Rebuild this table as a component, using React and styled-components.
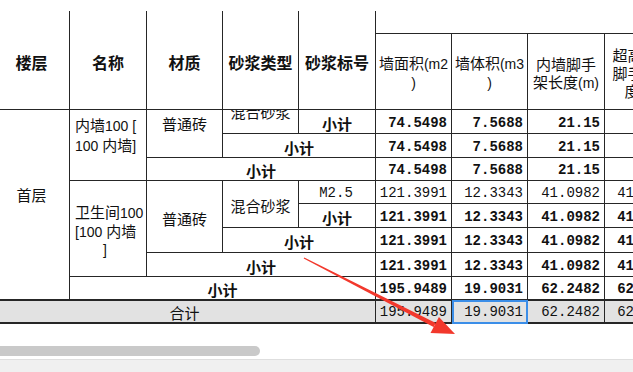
import React, { useLayoutEffect, useRef } from 'react';
import styled, { createGlobalStyle, css } from 'styled-components';

const GlobalStyle = createGlobalStyle`
  html, body { margin: 0; padding: 0; background: #fff; overflow: hidden; }
  body { font-family: "Noto Sans CJK SC", "Liberation Sans", sans-serif; color: #111; }
`;

const LINE = '#262626';
const CJK = `"Noto Sans CJK SC", "Liberation Sans", sans-serif`;
const COLS = [76, 77, 76, 76, 77, 76, 76, 77, 76];
const TABLE_W = COLS.reduce((a, b) => a + b, 0);

const Page = styled.div`
  position: relative;
  width: 633px;
  height: 372px;
  display: flex;
  flex-direction: column;
  overflow: hidden;
  background: #fff;
`;

const Viewport = styled.div`
  flex: none;
  width: 633px;
  height: ${(p) => p.$h}px;
  margin-top: ${(p) => p.$mt || 0}px;
  overflow: hidden;
`;

const Grid = styled.table`
  table-layout: fixed;
  border-collapse: separate;
  border-spacing: 0;
  width: ${TABLE_W}px;
`;

const Row = styled.tr`
  height: ${(p) => p.$h}px;
`;

const baseCell = css`
  border-right: 1px solid ${LINE};
  border-bottom: 1px solid ${LINE};
  box-sizing: border-box;
  overflow: hidden;
  white-space: nowrap;
  vertical-align: middle;
  color: #111;
`;

const HeadCell = styled.th`
  ${baseCell}
  padding: 3px 2px 0;
  font-family: ${CJK};
  font-size: ${(p) => (p.$bold ? 16 : 15)}px;
  font-weight: ${(p) => (p.$bold ? 700 : 400)};
  line-height: 18px;
  text-align: center;
`;

const Half = styled.span`
  font-family: "Liberation Sans", sans-serif;
  font-size: 14px;
`;

const TextCell = styled.td`
  ${baseCell}
  padding: ${(p) => p.$pt ?? 3}px 5px ${(p) => p.$pb ?? 0}px;
  font-family: ${CJK};
  font-size: 15px;
  font-weight: ${(p) => (p.$bold ? 700 : 400)};
  line-height: 17px;
  text-align: ${(p) => p.$align || 'center'};
`;

const NameLine = styled.div`
  height: ${(p) => p.$lh}px;
  line-height: ${(p) => p.$lh}px;
  padding-left: ${(p) => p.$indent || 0}px;
  white-space: nowrap;
`;

const NumCell = styled.td`
  ${baseCell}
  padding: 3px 4px 0 2px;
  font-family: "Liberation Mono", monospace;
  font-size: 14px;
  line-height: 17px;
  font-weight: ${(p) => (p.$bold ? 700 : 400)};
  text-align: ${(p) => p.$align || 'right'};
  ${(p) =>
    p.$selected &&
    css`
      outline: 2px solid #3b8ee8;
      outline-offset: -2px;
    `}
`;

const TotalRow = styled(Row)`
  & > td {
    background: #e2e2e2;
    border-top: 1px solid ${LINE};
    border-bottom-width: 2px;
    padding-top: 2px;
  }
`;

const ScrollArea = styled.div`
  flex: none;
  height: 35px;
  padding-top: 22px;
  box-sizing: border-box;
`;

const Thumb = styled.div`
  width: 260px;
  height: 10px;
  border-radius: 0 5px 5px 0;
  background: #c9c9c9;
`;

const StatusBand = styled.div`
  flex: 1;
  border-top: 1px solid #dedede;
  background: #f0f0f0;
`;

const Overlay = styled.svg`
  position: absolute;
  left: 0;
  top: 0;
  pointer-events: none;
`;

const Cols = () => (
  <colgroup>
    {COLS.map((w, i) => (
      <col key={i} style={{ width: w }} />
    ))}
  </colgroup>
);

const Nums = ({ values, bold, selected }) =>
  values.map((v, i) => (
    <NumCell key={i} $bold={bold} $selected={selected === i}>
      {v}
    </NumCell>
  ));

const A = ['74.5498', '7.5688', '21.15', ''];
const B = ['121.3991', '12.3343', '41.0982', '41.0982'];
const C = ['195.9489', '19.9031', '62.2482', '62.2482'];

export default function App() {
  const headRef = useRef(null);
  const bodyRef = useRef(null);

  useLayoutEffect(() => {
    if (headRef.current) headRef.current.scrollLeft = 6;
    if (bodyRef.current) {
      bodyRef.current.scrollLeft = 6;
      bodyRef.current.scrollTop = 24;
    }
  }, []);

  return (
    <Page>
      <GlobalStyle />
      <Viewport ref={headRef} $h={99} $mt={11}>
        <Grid>
          <Cols />
          <thead>
            <Row $h={23}>
              <HeadCell $bold rowSpan={2}>楼层</HeadCell>
              <HeadCell $bold rowSpan={2}>名称</HeadCell>
              <HeadCell $bold rowSpan={2}>材质</HeadCell>
              <HeadCell $bold rowSpan={2}>砂浆类型</HeadCell>
              <HeadCell $bold rowSpan={2}>砂浆标号</HeadCell>
              <HeadCell colSpan={4} />
            </Row>
            <Row $h={76}>
              <HeadCell>
                墙面积<Half>(m2</Half>
                <br />
                <Half>)</Half>
              </HeadCell>
              <HeadCell>
                墙体积<Half>(m3</Half>
                <br />
                <Half>)</Half>
              </HeadCell>
              <HeadCell>
                内墙脚手
                <br />
                架长度<Half>(m)</Half>
              </HeadCell>
              <HeadCell>
                超高内墙
                <br />
                脚手架长
                <br />
                度<Half>(m)</Half>
              </HeadCell>
            </Row>
          </thead>
        </Grid>
      </Viewport>

      <Viewport ref={bodyRef} $h={214}>
        <Grid>
          <Cols />
          <tbody>
            <Row $h={24}>
              <TextCell rowSpan={9}>首层</TextCell>
              <TextCell rowSpan={4} $align="left" $pt={4}>
                <NameLine $lh={20}>
                  内墙<Half>100 [</Half>
                </NameLine>
                <NameLine $lh={20}>
                  <Half>100 </Half>内墙<Half>]</Half>
                </NameLine>
              </TextCell>
              <TextCell rowSpan={3}>普通砖</TextCell>
              <TextCell rowSpan={2}>混合砂浆</TextCell>
              <NumCell $align="center">M2.5</NumCell>
              <Nums values={A} />
            </Row>
            <Row $h={24}>
              <TextCell $bold>小计</TextCell>
              <Nums values={A} bold />
            </Row>
            <Row $h={24}>
              <TextCell $bold colSpan={2}>小计</TextCell>
              <Nums values={A} bold />
            </Row>
            <Row $h={23}>
              <TextCell $bold colSpan={3}>小计</TextCell>
              <Nums values={A} bold />
            </Row>
            <Row $h={23}>
              <TextCell rowSpan={4} $align="left" $pt={2} $pb={0}>
                <NameLine $lh={19}>
                  卫生间<Half>100</Half>
                </NameLine>
                <NameLine $lh={19}>
                  <Half>[100 </Half>内墙
                </NameLine>
                <NameLine $lh={17} $indent={28}>
                  <Half>]</Half>
                </NameLine>
              </TextCell>
              <TextCell rowSpan={3}>普通砖</TextCell>
              <TextCell rowSpan={2}>混合砂浆</TextCell>
              <NumCell $align="center">M2.5</NumCell>
              <Nums values={B} />
            </Row>
            <Row $h={24}>
              <TextCell $bold>小计</TextCell>
              <Nums values={B} bold />
            </Row>
            <Row $h={25}>
              <TextCell $bold colSpan={2}>小计</TextCell>
              <Nums values={B} bold />
            </Row>
            <Row $h={24}>
              <TextCell $bold colSpan={3}>小计</TextCell>
              <Nums values={B} bold />
            </Row>
            <Row $h={23}>
              <TextCell $bold colSpan={4}>小计</TextCell>
              <Nums values={C} bold />
            </Row>
            <TotalRow $h={24}>
              <TextCell colSpan={5}>合计</TextCell>
              <Nums values={C} selected={1} />
            </TotalRow>
          </tbody>
        </Grid>
      </Viewport>

      <ScrollArea>
        <Thumb />
      </ScrollArea>
      <StatusBand />

      <Overlay width="633" height="372" viewBox="0 0 633 372">
        <polygon
          points="304.3,257.4 435.8,322.9 433.6,326.9 303.7,258.6"
          fill="#f2382c"
        />
        <polygon points="455,334 438.9,316.9 430.5,332.9" fill="#f2382c" />
      </Overlay>
    </Page>
  );
}
